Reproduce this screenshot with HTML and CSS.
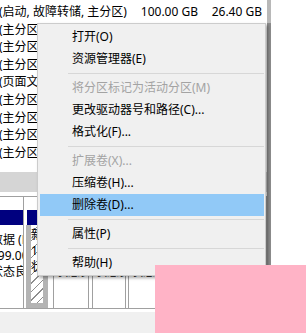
FILE: index.html
```html
<!DOCTYPE html>
<html lang="zh-CN">
<head>
  <meta charset="UTF-8">
  <title>磁盘管理</title>
  <link rel="stylesheet" href="styles.css">
</head>
<body>
  <div class="screen">
    <div class="pane">
      <div class="volumes">
        <div class="vol"><span>(启动, 故障转储, 主分区)</span><span class="num">100.00 GB</span><span class="num">26.40 GB</span></div>
        <div class="vol"><span>(主分区)</span><span class="num">199.00 GB</span><span class="num">120.35 GB</span></div>
        <div class="vol"><span>(主分区)</span><span class="num">150.00 GB</span><span class="num">88.12 GB</span></div>
        <div class="vol"><span>(主分区)</span><span class="num">120.00 GB</span><span class="num">64.90 GB</span></div>
        <div class="vol"><span>(页面文件, 主分区)</span><span class="num">80.00 GB</span><span class="num">41.07 GB</span></div>
        <div class="vol"><span>(主分区)</span><span class="num">60.00 GB</span><span class="num">22.48 GB</span></div>
        <div class="vol"><span>(主分区)</span><span class="num">50.00 GB</span><span class="num">30.11 GB</span></div>
        <div class="vol"><span>(主分区)</span><span class="num">40.00 GB</span><span class="num">12.64 GB</span></div>
        <div class="vol"><span>(主分区)</span><span class="num">30.00 GB</span><span class="num">9.85 GB</span></div>
      </div>
      <div class="hscroll"></div>
      <div class="diskmap">
        <div class="disk-row">
          <div class="part part-first">
            <div class="part-head"></div>
            <div class="part-body">
              <div>数据 (D:)</div>
              <div>199.00 GB NTFS</div>
              <div>状态良好 (基本数据分区)</div>
            </div>
          </div>
          <div class="part part-picked">
            <div class="part-head"></div>
            <div class="part-body">
              <div>新加卷 (E:)</div>
              <div>150.00 GB NTFS</div>
              <div>状态良好 (主分区)</div>
            </div>
          </div>
          <div class="part part-c">
            <div class="part-head"></div>
            <div class="part-body">
              <div>文档 (F:)</div>
              <div>120.00 GB</div>
              <div>状态良好</div>
            </div>
          </div>
          <div class="part part-d">
            <div class="part-head"></div>
            <div class="part-body">
              <div>软件 (G:)</div>
              <div>80.00 GB</div>
              <div>状态良好</div>
            </div>
          </div>
          <div class="part part-e">
            <div class="part-head"></div>
            <div class="part-body">
              <div>娱乐 (H:)</div>
              <div>60.00 GB</div>
              <div>状态良好</div>
            </div>
          </div>
          <div class="part part-rest">
            <div class="part-head"></div>
            <div class="part-body">
              <div>备份 (I:)</div>
              <div>50.00 GB</div>
              <div>状态良好</div>
            </div>
          </div>
        </div>
      </div>
      <div class="status"></div>
    </div>
    <div class="edge"></div>
    <div class="outside"></div>

    <ul class="menu">
      <li>打开(O)</li>
      <li>资源管理器(E)</li>
      <li class="sep"></li>
      <li class="off">将分区标记为活动分区(M)</li>
      <li>更改驱动器号和路径(C)...</li>
      <li>格式化(F)...</li>
      <li class="sep"></li>
      <li class="off">扩展卷(X)...</li>
      <li>压缩卷(H)...</li>
      <li class="hot">删除卷(D)...</li>
      <li class="sep"></li>
      <li>属性(P)</li>
      <li class="sep"></li>
      <li>帮助(H)</li>
    </ul>

    <div class="watermark"></div>
  </div>
</body>
</html>
```

FILE: styles.css
```css
body {
  margin: 0;
  background: #fff;
}
.screen {
  position: relative;
  display: flex;
  width: 306px;
  height: 333px;
  overflow: hidden;
  background: #fff;
  color: #000;
  font-family: "Noto Sans", "Noto Sans CJK SC", sans-serif;
  font-size: 12px;
}
.pane {
  display: flex;
  flex-direction: column;
  flex: none;
  width: 267px;
  overflow: hidden;
  background: #fff;
}
.volumes {
  height: 172px;
  padding-top: 3px;
  box-sizing: border-box;
  overflow: hidden;
}
.vol {
  display: grid;
  grid-template-columns: 141px 58px 64px;
  height: 17.6px;
  line-height: 17.6px;
  margin-left: -1px;
  white-space: nowrap;
}
.num {
  text-align: right;
}
.hscroll {
  flex: none;
  height: 20px;
  background: #d5d5d5;
}
.diskmap {
  flex: none;
  padding-top: 4px;
}
.disk-row {
  display: flex;
  height: 111px;
  border-top: 1px solid #a0a0a0;
  border-bottom: 1px solid #a0a0a0;
}
.part {
  display: flex;
  flex-direction: column;
  flex: none;
  box-sizing: border-box;
  padding-top: 13px;
  overflow: hidden;
}
.part-head {
  flex: none;
  height: 15px;
  background: #00007f;
}
.part-body {
  flex: 1;
  padding-top: 7px;
  line-height: 16px;
  white-space: nowrap;
}
.part-first {
  width: 64px;
  margin-left: -40px;
  border-right: 1px solid #a0a0a0;
}
.part-first .part-body {
  padding-left: 31px;
}
.part-picked {
  width: 25px;
  padding-left: 2px;
  padding-right: 1px;
}
.part-picked .part-head {
  margin-left: 1px;
}
.part-picked .part-body {
  padding-top: 2px;
  border: 5px solid #b4b4b4;
  border-top: 0;
  background: repeating-linear-gradient(135deg, #fff 0 5px, #8e8e8e 5px 6px);
}
.part-c,
.part-d,
.part-e,
.part-rest {
  border-left: 1px solid #a0a0a0;
  border-right: 1px solid #a0a0a0;
  padding-left: 2px;
  padding-right: 2px;
}
.part-c {
  width: 36px;
  margin-left: 4px;
}
.part-d {
  width: 34px;
  margin-left: 3px;
}
.part-e {
  width: 38px;
  margin-left: 2px;
}
.part-rest {
  flex: 1;
  margin-left: 3px;
}
.status {
  flex: 1;
  border-top: 3px solid #fff;
  background: #f0f0f0;
}
.edge {
  flex: none;
  width: 4px;
  background: linear-gradient(#b8b8b8 0 23px, #8c8c8c 23px);
}
.outside {
  flex: 1;
  background: #fff;
}
.menu {
  position: absolute;
  left: 37px;
  top: 23px;
  width: 229px;
  margin: 0;
  padding: 2px 1px 1px 2px;
  box-sizing: border-box;
  list-style: none;
  background: #f0f0f0;
  border: 1px solid #cccccc;
  box-shadow: 2px 2px 3px rgba(0, 0, 0, 0.35);
}
.menu li {
  height: 22px;
  line-height: 22px;
  padding-left: 32px;
  white-space: nowrap;
}
.menu .sep {
  height: 3px;
  margin: 0 0 3px 28px;
  padding: 0;
  border-bottom: 1px solid #d7d7d7;
}
.menu .off {
  color: #a3a3a3;
}
.menu .hot {
  background: #91c9f7;
}
.watermark {
  position: absolute;
  left: 155px;
  top: 265px;
  right: 0;
  bottom: 0;
  background: #ffb3c6;
}
```
